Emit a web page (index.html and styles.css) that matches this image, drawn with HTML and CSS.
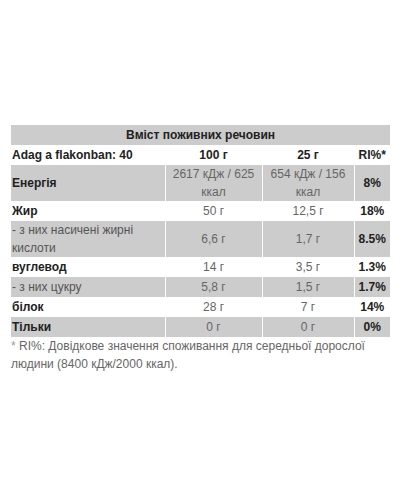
FILE: index.html
```html
<!DOCTYPE html>
<html lang="uk">
<head>
<meta charset="utf-8">
<link rel="stylesheet" href="styles.css">
</head>
<body>
<div class="wrap">
  <table class="nutri">
    <colgroup>
      <col class="c1"><col class="c2"><col class="c3"><col class="c4">
    </colgroup>
    <tr class="gray"><th colspan="4" class="title">Вміст поживних речовин</th></tr>
    <tr class="white head">
      <th class="label">Adag a flakonban: 40</th>
      <th>100 г</th>
      <th>25 г</th>
      <th>RI%*</th>
    </tr>
    <tr class="gray">
      <td class="label">Енергія</td>
      <td class="val">2617 кДж / 625 ккал</td>
      <td class="val">654 кДж / 156 ккал</td>
      <td class="pct">8%</td>
    </tr>
    <tr class="white">
      <td class="label">Жир</td>
      <td class="val">50 г</td>
      <td class="val">12,5 г</td>
      <td class="pct">18%</td>
    </tr>
    <tr class="gray">
      <td class="sub">- з них насичені жирні кислоти</td>
      <td class="val">6,6 г</td>
      <td class="val">1,7 г</td>
      <td class="pct">8.5%</td>
    </tr>
    <tr class="white">
      <td class="label">вуглевод</td>
      <td class="val">14 г</td>
      <td class="val">3,5 г</td>
      <td class="pct">1.3%</td>
    </tr>
    <tr class="gray">
      <td class="sub">- з них цукру</td>
      <td class="val">5,8 г</td>
      <td class="val">1,5 г</td>
      <td class="pct">1.7%</td>
    </tr>
    <tr class="white">
      <td class="label">білок</td>
      <td class="val">28 г</td>
      <td class="val">7 г</td>
      <td class="pct">14%</td>
    </tr>
    <tr class="gray">
      <td class="label">Тільки</td>
      <td class="val">0 г</td>
      <td class="val">0 г</td>
      <td class="pct">0%</td>
    </tr>
  </table>
  <p class="note"><span class="star">*</span> RI%: Довідкове значення споживання для середньої дорослої людини (8400 кДж/2000 ккал).</p>
</div>
</body>
</html>
```
FILE: styles.css
```css
html, body {
  margin: 0;
  padding: 0;
  background: #fff;
}
body {
  font-family: "Liberation Sans", Arial, sans-serif;
  font-size: 12px;
  color: #222;
}
.wrap {
  padding: 125px 10px 0 11px;
}
.nutri {
  width: 379px;
  table-layout: fixed;
  border-collapse: collapse;
  border-spacing: 0;
}
.c1 { width: 154px; }
.c2 { width: 97px; }
.c3 { width: 92px; }
.c4 { width: 36px; }
.nutri tr { height: 20px; }
.nutri th, .nutri td {
  padding: 0 1px;
  line-height: 18px;
  text-align: center;
  vertical-align: middle;
}
.nutri td + td, .nutri th + th {
  border-left: 1px solid #fff;
}
.gray { background: #cccccc; }
.white { background: #fff; }
.title { font-weight: bold; color: #222; }
.head th { font-weight: bold; color: #222; }
.head th.label { text-align: left; }
.label {
  text-align: left !important;
  font-weight: bold;
  color: #222;
}
.sub {
  text-align: left !important;
  color: #555;
}
.val { color: #666; }
.pct { font-weight: bold; color: #222; }
.note {
  margin: 0;
  line-height: 18px;
  color: #666;
}
.star { color: #999; }
```
